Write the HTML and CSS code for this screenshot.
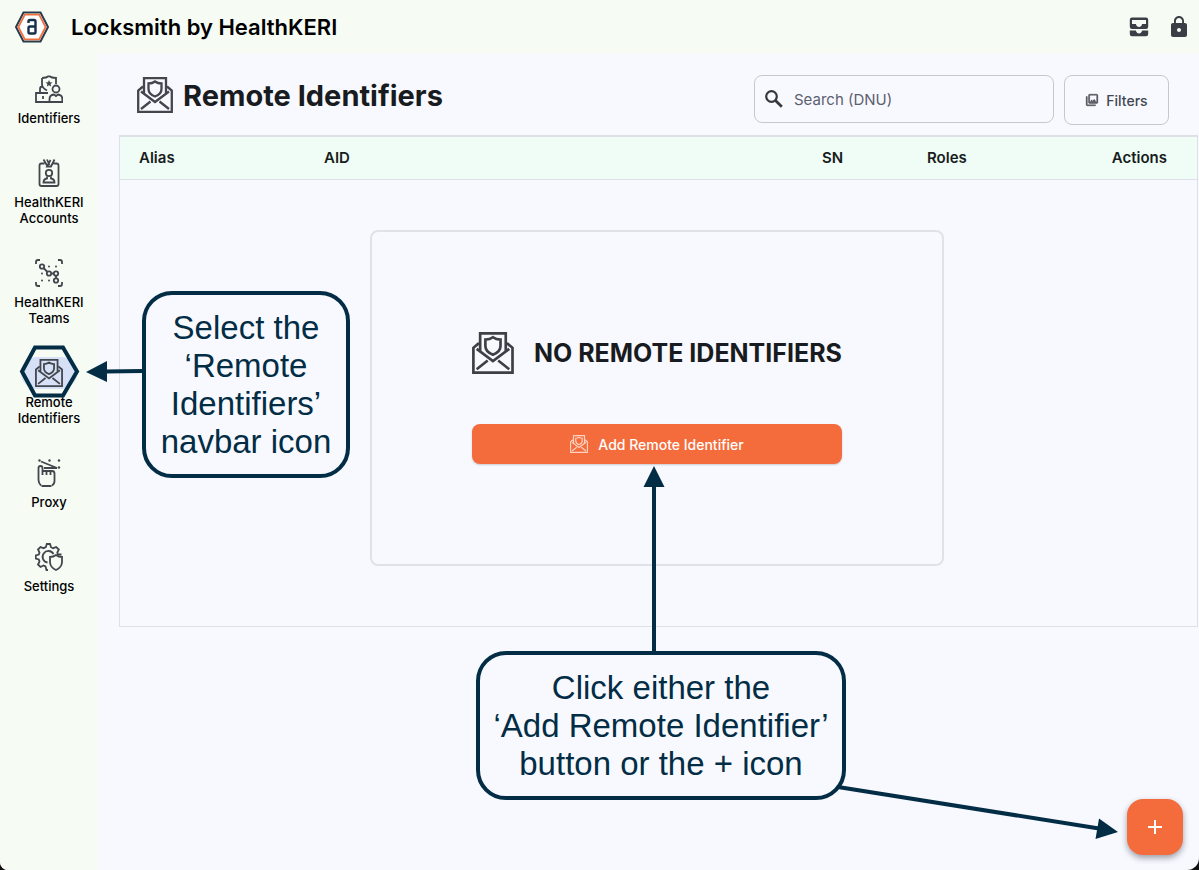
FILE: index.html
```html
<!DOCTYPE html>
<html lang="en">
<head>
<meta charset="utf-8">
<title>Locksmith by HealthKERI</title>
<link rel="stylesheet" href="styles.css">
</head>
<body>
<svg class="sprite" aria-hidden="true">
  <symbol id="mail-shield" viewBox="0 0 36 36">
    <g fill="none" stroke="currentColor" stroke-width="2.300">
      <path d="M6 9.500L1.200 13.500V34.800H34.800V13.500L30 9.500"/>
      <path d="M7 16V1.200H29V16"/>
      <path d="M4 14.500L18 25L32 14.500"/>
      <path d="M4 32L13.500 24.500M32 32L22.500 24.500"/>
      <path d="M18 4.500C20 6 22 6.500 24.500 6.500V12C24.500 15.500 22 18 18 19.500C14 18 11.500 15.500 11.500 12V6.500C14 6.500 16 6 18 4.500Z"/>
    </g>
  </symbol>
</svg>
<div class="app">
  <header class="topbar">
    <svg class="logo" viewBox="0 0 36 32" aria-hidden="true">
      <path d="M9.500 1.500H26.500L34 16L26.500 30.500H9.500L2 16Z" fill="#fff" stroke="#263c4c" stroke-width="2"/>
      <path d="M10.800 3.600H25.200L31.600 16L25.200 28.400H10.800L4.400 16Z" fill="none" stroke="#f0703f" stroke-width="1.800"/>
      <path d="M14.500 12V10.500Q14.500 9 16 9H20Q21.500 9 21.500 10.500V21Q21.500 22.500 20 22.500H16Q14.500 22.500 14.500 21V17Q14.500 15.500 16 15.500H21.500" fill="none" stroke="#14304a" stroke-width="2.400"/>
    </svg>
    <span class="brand">Locksmith by HealthKERI</span>
    <div class="topbar-actions">
      <button class="icon-button" type="button" aria-label="Inbox">
        <svg viewBox="0 0 24 24" fill="currentColor"><path d="M19 2.500H5a2.200 2.200 0 0 0-2.200 2.200v7A2.200 2.200 0 0 0 5 13.900h14a2.200 2.200 0 0 0 2.200-2.200v-7A2.200 2.200 0 0 0 19 2.500zm0 6.500h-4c0 1.620-1.380 3-3 3s-3-1.380-3-3H5V5h14v4zm-4 6.500h6.200v3.500a2.200 2.200 0 0 1-2.200 2.200H5a2.200 2.200 0 0 1-2.200-2.200v-3.500H9c0 1.660 1.340 3 3 3s3-1.340 3-3z"/></svg>
      </button>
      <button class="icon-button" type="button" aria-label="Lock">
        <svg viewBox="0 0 24 24" fill="currentColor"><path d="M18 8h-1V6c0-2.760-2.240-5-5-5S7 3.240 7 6v2H6c-1.100 0-2 .9-2 2v10c0 1.100.9 2 2 2h12c1.100 0 2-.9 2-2V10c0-1.100-.9-2-2-2zm-6 9c-1.100 0-2-.9-2-2s.9-2 2-2 2 .9 2 2-.9 2-2 2zm3.100-9H8.900V6c0-1.710 1.390-3.100 3.100-3.100s3.100 1.390 3.100 3.100v2z"/></svg>
      </button>
    </div>
  </header>
  <div class="layout">
    <nav class="rail">
      <a class="rail-item" href="#identifiers">
        <span class="rail-icon"><svg viewBox="0 0 28 28"><path d="M14 1C16 2.500 18.500 3 21 3V9M7 3V9C7 12 9 14 12 15.500M7 3C9.500 3 12 2.500 14 1M5 17V14Q5 11.500 7.500 11.500M13 18H1V27H15M8 21V24"/><circle cx="21" cy="14" r="3.500"/><path d="M14.500 27V24Q14.500 20 19 19.500L21 21L23 19.500Q27.300 20 27.300 24V27Z"/><path class="solid" d="M14 5L15 7.300L17.500 7.500L15.600 9.100L16.200 11.500L14 10.200L11.800 11.500L12.400 9.100L10.500 7.500L13 7.300Z"/></svg></span>
        <span>Identifiers</span>
      </a>
      <a class="rail-item" href="#accounts">
        <span class="rail-icon"><svg viewBox="0 0 28 28"><path d="M9.500 4.500H6.500Q4.500 4.500 4.500 6.500V25Q4.500 27 6.500 27H21.500Q23.500 27 23.500 25V6.500Q23.500 4.500 21.500 4.500H18.500M8.500 .5L12 6.500M12 .5L14.500 6M15.500 1L12 7.500H16L19.500 .5"/><circle cx="14" cy="14" r="3.200"/><path d="M12 17.500V19.500Q8.500 20 8.500 23.500H19.500Q19.500 20 16 19.500V17.500"/></svg></span>
        <span>HealthKERI<br>Accounts</span>
      </a>
      <a class="rail-item" href="#teams">
        <span class="rail-icon"><svg viewBox="0 0 28 28"><path d="M1 5V3Q1 1 3 1H5M23 1H25Q27 1 27 3V5M27 23V25Q27 27 25 27H23M5 27H3Q1 27 1 25V23M8.500 9L12.500 13M16.500 14.500H19M21 17V19"/><circle cx="7" cy="7.500" r="2.200"/><circle cx="14" cy="14.500" r="2.200"/><circle cx="21" cy="14.500" r="2.200"/><circle cx="21" cy="21.500" r="2.200"/><g class="solid"><circle cx="14" cy="7.500" r="1"/><circle cx="21" cy="7.500" r="1"/><circle cx="7" cy="14.500" r="1"/><circle cx="7" cy="21.500" r="1"/><circle cx="14" cy="21.500" r="1"/></g></svg></span>
        <span>HealthKERI<br>Teams</span>
      </a>
      <a class="rail-item" href="#remote" aria-current="page">
        <span class="rail-icon rail-icon-active"><svg><use href="#mail-shield"/></svg></span>
        <span>Remote<br>Identifiers</span>
      </a>
      <a class="rail-item" href="#proxy">
        <span class="rail-icon"><svg viewBox="0 0 28 28"><path d="M6.500 27H16.500M6 26.500Q3.500 24 3.500 21V9Q3.500 7 5.500 7Q7.500 7 7.500 9V16M7.500 12H17Q19.500 12 19.500 14.500V22Q19.500 25 17 26.500M11.500 12V16M15.500 12V16M6 2.500L22 9H9"/><g class="solid"><circle cx="4.500" cy="1.500" r="1.200"/><circle cx="14.500" cy="1.500" r="1.200"/><circle cx="24" cy="1.500" r="1.200"/><circle cx="24" cy="8.500" r="1.200"/></g></svg></span>
        <span>Proxy</span>
      </a>
      <a class="rail-item" href="#settings">
        <span class="rail-icon"><svg viewBox="0 0 28 28"><path d="M13 27H11.500L10.500 23.500L8.500 22.500L5.500 24L3 21.500L4.500 18.500L3.800 16.500L.8 15.500V12.500L3.800 11.500L4.500 9.500L3 6.500L5.500 4L8.500 5.200L10.800 4.200L11.800 1H15L16 4.200L18.200 5.200L21.200 4L23.800 6.500L22.300 9.500L23 11.500H26.500"/><path d="M12.500 19.500A5.800 5.800 0 1 1 18.500 11"/><path d="M21 12C23 13.500 25 14 27 14V19.500Q26.500 24.500 21 27Q15.500 24.500 15 19.500V14C17 14 19 13.500 21 12Z"/></svg></span>
        <span>Settings</span>
      </a>
    </nav>
    <main class="content">
      <div class="page-head">
        <svg class="page-icon" aria-hidden="true"><use href="#mail-shield"/></svg>
        <h1 class="page-title">Remote Identifiers</h1>
        <label class="search">
          <svg class="search-icon" viewBox="0 0 18 18" aria-hidden="true"><g fill="none" stroke="currentColor"><circle cx="6.500" cy="6.500" r="5.300" stroke-width="2.200"/><path d="M10.500 10.500L16.800 16.800" stroke-width="2.800"/></g></svg>
          <input class="search-input" type="text" placeholder="Search (DNU)" aria-label="Search">
        </label>
        <button class="filters" type="button">
          <svg class="filters-icon" viewBox="0 0 24 24" fill="currentColor" aria-hidden="true"><path d="M20 4v12H8V4h12m0-2H8a2 2 0 0 0-2 2v12a2 2 0 0 0 2 2h12a2 2 0 0 0 2-2V4a2 2 0 0 0-2-2zm-8.500 9.700 1.700 2.260 2.480-3.100L19 15H9zM2 6v14a2 2 0 0 0 2 2h14v-2H4V6z" stroke="currentColor" stroke-width=".6"/></svg>
          Filters
        </button>
      </div>
      <section class="panel">
        <table class="grid">
          <colgroup><col class="col-alias"><col class="col-aid"><col class="col-sn"><col class="col-roles"><col></colgroup>
          <thead>
            <tr><th>Alias</th><th>AID</th><th>SN</th><th>Roles</th><th class="actions">Actions</th></tr>
          </thead>
        </table>
        <div class="empty">
          <div class="empty-head">
            <svg class="empty-icon" aria-hidden="true"><use href="#mail-shield"/></svg>
            <h2 class="empty-title">NO REMOTE IDENTIFIERS</h2>
          </div>
          <button class="add" type="button">
            <svg class="add-icon" aria-hidden="true"><use href="#mail-shield"/></svg>
            Add Remote Identifier
          </button>
        </div>
      </section>
    </main>
  </div>
  <button class="fab" type="button" aria-label="Add">
    <svg viewBox="0 0 24 24" aria-hidden="true"><path d="M12 5V19M5 12H19" stroke="currentColor" stroke-width="2"/></svg>
  </button>
  <svg class="arrows" viewBox="0 0 1199 870" aria-hidden="true">
    <g fill="none" stroke="#032d45" stroke-width="4">
      <path d="M35 347.500H63L77 371.500L63 395.500H35L22 371.500Z"/>
      <path d="M143 371L105 371.500"/>
      <path d="M654 653V485"/>
      <path d="M838 787L1099 828.500"/>
    </g>
    <path fill="#032d45" d="M86 372L107 361V382ZM654 466L643.500 487H664.500ZM1118 832L1099 818.500L1095.500 839Z"/>
  </svg>
  <p class="callout callout-nav">Select the<br>‘Remote<br>Identifiers’<br>navbar icon</p>
  <p class="callout callout-add">Click either the<br>‘Add Remote Identifier’<br>button or the + icon</p>
</div>
</body>
</html>
```
FILE: styles.css
```css
* { box-sizing: border-box; }
html { background: #111; }
body {
  margin: 0;
  font-family: Inter, "Liberation Sans", sans-serif;
  color: #181c20;
}
button, input { font: inherit; color: inherit; }
.sprite { position: absolute; width: 0; height: 0; }

.app {
  position: relative;
  display: flex;
  flex-direction: column;
  min-height: 100vh;
  background: #f8f9ff;
  border-radius: 0 0 12px 8px;
  overflow: hidden;
}

.topbar {
  display: flex;
  align-items: center;
  height: 54px;
  padding: 0 8px 0 14px;
  background: #f6fbf4;
}
.logo { width: 36px; height: 32px; }
.brand { margin-left: 21px; font-size: 22px; font-weight: 600; color: #000; }
.topbar-actions { display: flex; gap: 16px; margin-left: auto; color: #3b3e45; }
.icon-button { width: 24px; height: 24px; padding: 0; border: 0; background: none; }
.icon-button svg { display: block; }

.layout { display: flex; flex: 1; }
.rail {
  display: flex;
  flex-direction: column;
  gap: 31px;
  flex: 0 0 98px;
  padding-top: 19px;
  background: #f6fbf4;
}
.rail-item {
  display: flex;
  flex-direction: column;
  align-items: center;
  gap: 5px;
  font-size: 13px;
  font-weight: 500;
  line-height: 16px;
  text-align: center;
  text-decoration: none;
  color: #000;
}
.rail-icon {
  display: flex;
  align-items: center;
  justify-content: center;
  width: 56px;
  height: 32px;
  border-radius: 16px;
  color: #43464d;
}
.rail-icon svg { width: 28px; height: 28px; fill: none; stroke: currentColor; stroke-width: 1.8; }
.rail-icon .solid { fill: currentColor; stroke: none; }
.rail-icon-active { background: #d6e1f7; }

.content { flex: 1; min-width: 0; padding: 21px 1px 0 21px; }
.page-head {
  display: flex;
  align-items: flex-start;
  height: 60px;
  padding: 0 29px 0 18px;
}
.page-icon { width: 36px; height: 36px; margin-top: 2px; color: #43464d; }
.page-title { margin: 0 auto 0 10px; font-size: 29px; font-weight: 700; line-height: 42px; }
.search {
  display: flex;
  align-items: center;
  gap: 11px;
  width: 300px;
  height: 48px;
  padding: 0 10px;
  border: 1px solid #c5c7d0;
  border-radius: 8px;
}
.search-icon { width: 18px; height: 18px; color: #35383e; }
.search-input {
  flex: 1;
  min-width: 0;
  padding: 0;
  border: 0;
  outline: 0;
  background: none;
  font-size: 15px;
}
.search-input::placeholder { color: #5c6070; opacity: 1; }
.filters {
  display: flex;
  align-items: center;
  justify-content: center;
  gap: 7px;
  width: 105px;
  height: 50px;
  margin-left: 10px;
  padding: 0;
  border: 1px solid #c5c7d0;
  border-radius: 8px;
  background: none;
  font-size: 14px;
  font-weight: 500;
  color: #42464f;
}
.filters-icon { width: 14px; height: 14px; }

.panel { border: 1px solid #dde0e7; padding-bottom: 60px; }
.grid { width: 100%; border-collapse: collapse; table-layout: fixed; }
.grid th {
  height: 43px;
  padding: 0 0 0 19px;
  border-top: 1px solid #dde0e7;
  border-bottom: 1px solid #dde0e7;
  background: #effdf6;
  font-size: 15px;
  font-weight: 600;
  line-height: 18px;
  text-align: left;
}
.grid .actions { padding: 0 30px 0 0; text-align: right; }
.col-alias { width: 185px; }
.col-aid { width: 498px; }
.col-sn { width: 105px; }
.col-roles { width: 120px; }

.empty {
  display: flex;
  flex-direction: column;
  gap: 50px;
  width: 574px;
  margin: 50px auto 0 250px;
  padding: 100px;
  border: 2px solid #dfe2e8;
  border-radius: 8px;
}
.empty-head { display: flex; align-items: center; gap: 20px; }
.empty-icon { width: 42px; height: 42px; color: #3d4046; }
.empty-title { margin: 0; font-size: 25px; font-weight: 700; white-space: nowrap; }
.add {
  display: flex;
  align-items: center;
  justify-content: center;
  gap: 10px;
  height: 40px;
  padding: 0;
  border: 0;
  border-radius: 8px;
  background: #f56c3c;
  box-shadow: 0 1px 2px #c9cad2;
  color: #fff;
  font-size: 14px;
  font-weight: 500;
}
.add-icon { width: 18px; height: 18px; color: #ffd3c2; }

.fab {
  position: absolute;
  right: 16px;
  bottom: 15px;
  display: flex;
  align-items: center;
  justify-content: center;
  width: 56px;
  height: 56px;
  padding: 0;
  border: 0;
  border-radius: 16px;
  background: #f56c3c;
  box-shadow: 0 3px 6px #9b9da6;
  color: #fff;
}
.fab svg { width: 24px; height: 24px; }

.arrows { position: absolute; top: 0; left: 0; width: 1199px; height: 870px; pointer-events: none; }
.callout {
  position: absolute;
  margin: 0;
  padding: 14px 0 13px;
  border: 4px solid #032d45;
  border-radius: 30px;
  background: #f8f9ff;
  font-family: "Liberation Sans", Arial, sans-serif;
  font-size: 33px;
  line-height: 38px;
  text-align: center;
  white-space: nowrap;
  color: #032d45;
}
.callout-nav { top: 291px; left: 142px; width: 208px; }
.callout-add { top: 651px; left: 476px; width: 370px; }
```
